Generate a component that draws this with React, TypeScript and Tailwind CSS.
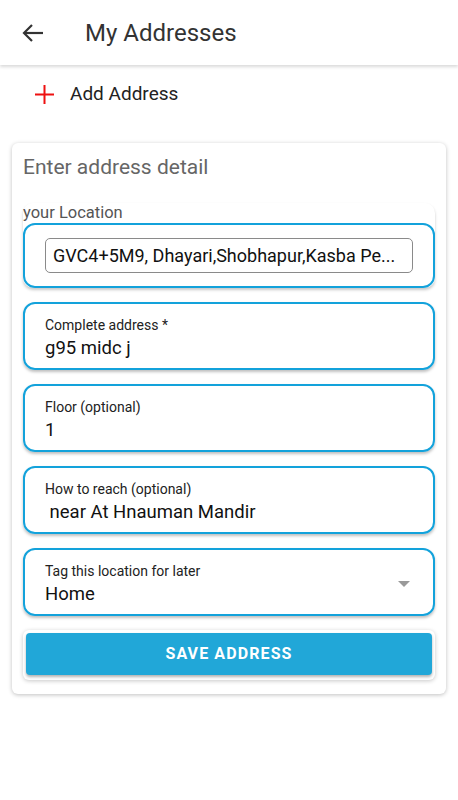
import React from "react"

const fields = [
  { label: "Complete address *", value: "g95 midc j" },
  { label: "Floor (optional)", value: "1" },
  { label: "How to reach (optional)", value: " near At Hnauman Mandir" },
]

const Field = ({ label, value, select }: { label: string; value: string; select?: boolean }) => {
  return (
    <div className="rounded-[12px] bg-white shadow-[0_2px_3px_rgba(0,0,0,0.25)]">
      <div className="relative h-[68px] rounded-[12px] border-2 border-[#13a2db] pl-[20px] pt-[12px]">
        <div className="text-[14px] leading-[18px] text-[#222]">{label}</div>
        <div className="mt-[2px] whitespace-pre text-[18.5px] leading-[24px] text-[#111]">{value}</div>
        {select && (
          <div className="absolute right-[23px] top-[31px] h-0 w-0 border-x-[6px] border-t-[6px] border-x-transparent border-t-[#9a9a9a]" />
        )}
      </div>
    </div>
  )
}

const App = () => {
  return (
    <div className="min-h-[800px] bg-white font-['Roboto',sans-serif]">
      <div className="flex h-[65px] items-center shadow-[0_2px_3px_rgba(0,0,0,0.15)]">
        <svg className="ml-[21px]" width="24" height="24" viewBox="0 0 24 24" fill="none" stroke="#333" strokeWidth="2.2">
          <path d="M22 12H3" />
          <path d="M11 4l-8 8 8 8" />
        </svg>
        <div className="ml-[40px] text-[24px] text-[#333]">My Addresses</div>
      </div>

      <div className="flex h-[58px] items-center pl-[35px]">
        <svg width="19" height="19" viewBox="0 0 19 19" stroke="#ee1111" strokeWidth="2">
          <path d="M9.5 0v19M0 9.5h19" />
        </svg>
        <div className="ml-[16px] text-[19px] text-[#222]">Add Address</div>
      </div>

      <div className="mx-[12px] mt-[20px] rounded-[6px] bg-white px-[11px] pb-[14px] pt-[12px] shadow-[0_1px_4px_rgba(0,0,0,0.25)]">
        <div className="text-[21px] leading-[24px] text-[#666]">Enter address detail</div>

        <div className="mt-[24px] flex flex-col gap-[14px]">
          <div className="rounded-[10px] bg-white shadow-[0_2px_3px_rgba(0,0,0,0.22)]">
            <div className="text-[16.5px] leading-[20px] text-[#555]">your Location</div>
            <div className="h-[65px] rounded-[12px] border-2 border-[#13a2db] px-[20px] pt-[13px]">
              <div className="h-[35px] whitespace-nowrap rounded-[5px] border border-[#8a8a8a] px-[7px] text-[18px] leading-[33px] text-[#111]">
                GVC4+5M9, Dhayari,Shobhapur,Kasba Pe...
              </div>
            </div>
          </div>

          {fields.map((f, i) => (
            <Field key={i} label={f.label} value={f.value} />
          ))}
          <Field label="Tag this location for later" value="Home" select />

          <div className="rounded-[6px] bg-white p-[3px] pb-[5px] shadow-[0_1px_4px_rgba(0,0,0,0.22)]">
            <button className="flex h-[42px] w-full items-center justify-center rounded-[4px] bg-[#21a7d8] text-[16px] font-bold tracking-[1.1px] text-white shadow-[0_2px_3px_rgba(0,0,0,0.3)]">
              SAVE ADDRESS
            </button>
          </div>
        </div>
      </div>
    </div>
  )
}

export default App
